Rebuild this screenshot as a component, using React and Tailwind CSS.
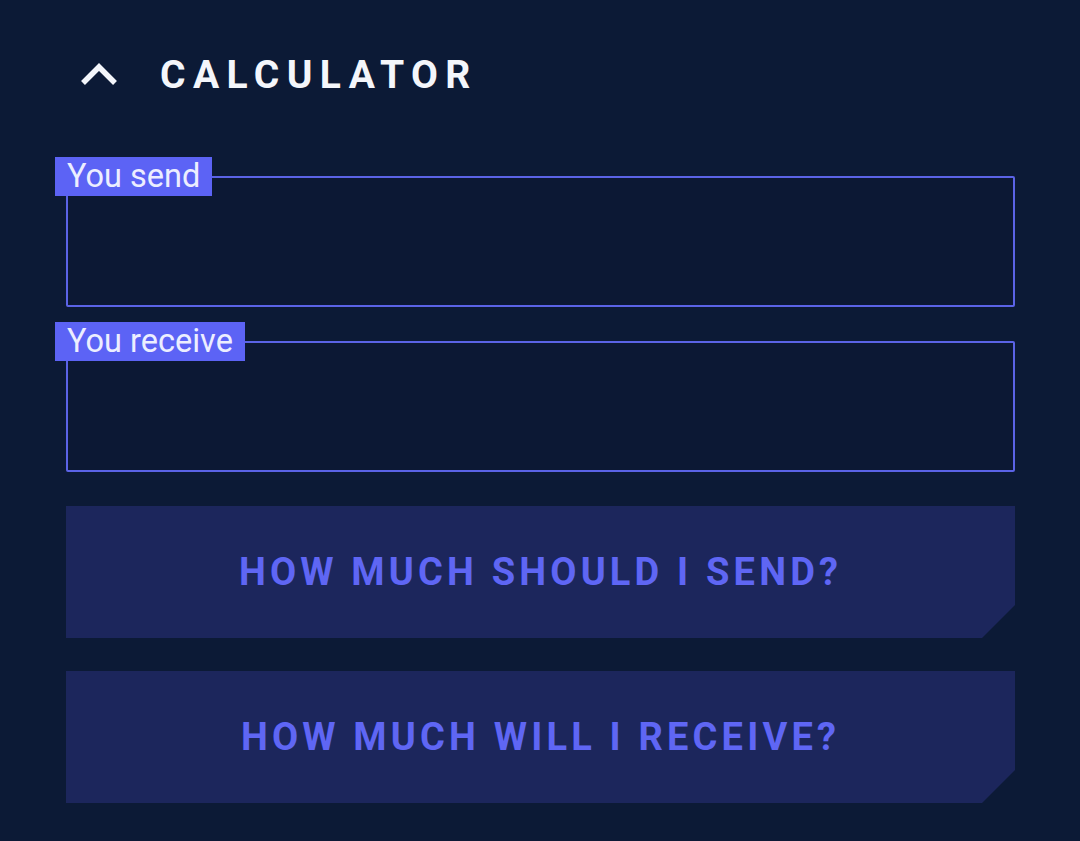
import React from "react";

const Field = ({ label }) => {
  return (
    <div className="relative">
      <span className="absolute left-[-11px] top-[-19px] bg-[#5c63f5] px-[12px] text-[32.5px] leading-[39px] text-[#eceeff]">
        {label}
      </span>
      <div className="h-[131px] rounded-[2px] border-2 border-[#5b63e6] bg-[#0c1834]"></div>
    </div>
  );
};

const CutButton = ({ children }) => {
  return (
    <button className="flex h-[132px] w-full items-center justify-center bg-[#1c265c] text-[38px] font-bold tracking-[0.11em] text-[#5f66f4] [clip-path:polygon(0_0,100%_0,100%_calc(100%_-_33px),calc(100%_-_33px)_100%,0_100%)]">
      {children}
    </button>
  );
};

export default function App() {
  return (
    <div className="min-h-screen bg-[#0c1a36] pl-[66px] pr-[65px] pt-[50px] font-['Roboto',sans-serif]">
      <div className="flex items-center">
        <svg width="40" height="26" viewBox="0 0 40 26" className="ml-[14px]">
          <path
            d="M3 21 L19 5 L35 21"
            fill="none"
            stroke="#f4f6fb"
            strokeWidth="5.5"
          />
        </svg>
        <h1 className="ml-[40px] text-[39px] font-bold leading-[50px] tracking-[0.19em] text-[#f4f6fb]">
          CALCULATOR
        </h1>
      </div>

      <div className="mt-[76px] flex flex-col gap-[34px]">
        <Field label="You send" />
        <Field label="You receive" />
      </div>

      <div className="mt-[34px] flex flex-col gap-[33px]">
        <CutButton>HOW MUCH SHOULD I SEND?</CutButton>
        <CutButton>HOW MUCH WILL I RECEIVE?</CutButton>
      </div>
    </div>
  );
}
